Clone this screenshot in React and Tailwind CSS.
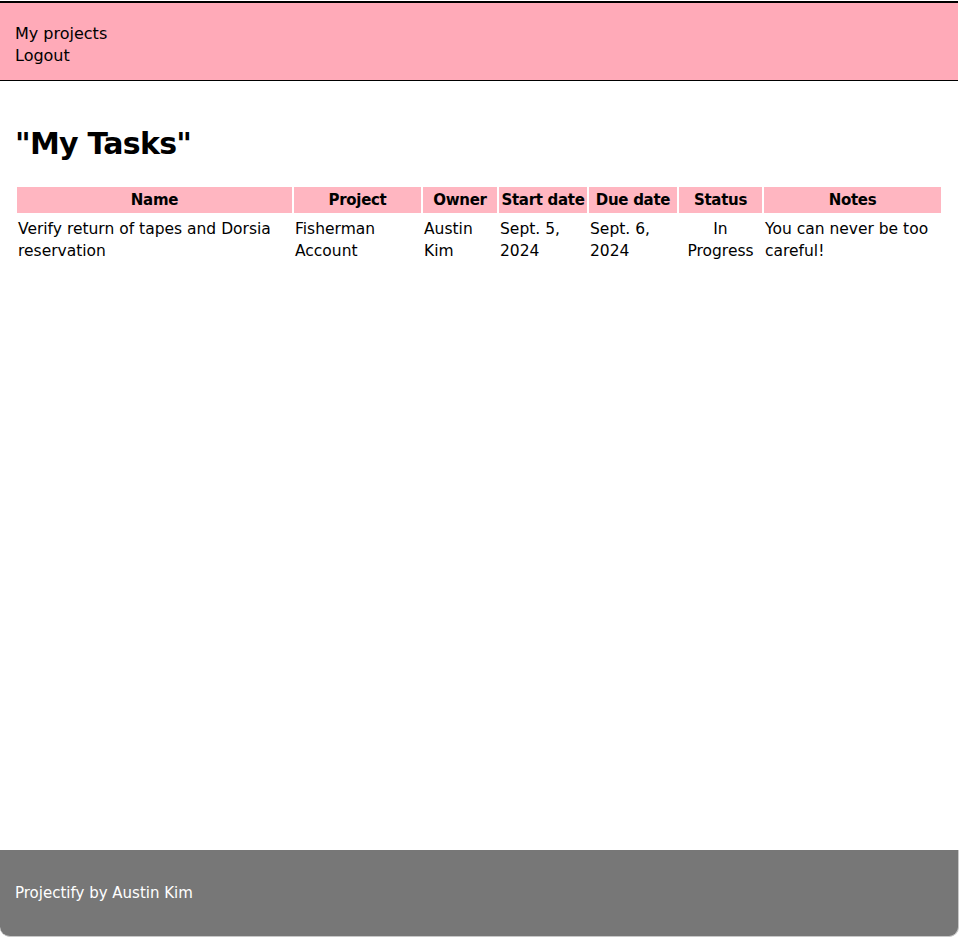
import React from "react";

const tasks = [
  {
    name: "Verify return of tapes and Dorsia reservation",
    project: "Fisherman Account",
    owner: "Austin Kim",
    start: "Sept. 5, 2024",
    due: "Sept. 6, 2024",
    status: "In Progress",
    notes: "You can never be too careful!",
  },
];

const columns = [
  { label: "Name", w: "w-[275px]" },
  { label: "Project", w: "w-[127px]" },
  { label: "Owner", w: "w-[74px]" },
  { label: "Start date", w: "w-[88px]" },
  { label: "Due date", w: "w-[88px]" },
  { label: "Status", w: "w-[83px]" },
  { label: "Notes", w: "w-[177px]" },
];

const App = () => {
  return (
    <div className="min-h-screen flex flex-col bg-white text-black font-['Comic_Sans_MS','DejaVu_Sans',sans-serif] pt-px">
      {/* Header */}
      <header className="w-[958px] bg-[#ffaab8] border-t-2 border-b border-black pl-[15px] pt-[20px] pb-[13px] text-[16px] leading-[22px]">
        <div>My projects</div>
        <div>Logout</div>
      </header>

      {/* Main */}
      <main className="flex-1 px-[15px] pt-[43px]">
        <h1 className="text-[30px] font-bold leading-[40px] tracking-tight">"My Tasks"</h1>

        <table className="table-fixed w-[928px] mt-[21px] border-separate border-spacing-[2px]">
          <thead>
            <tr className="text-[15px] tracking-[-0.02em]">
              {columns.map((c) => (
                <th key={c.label} className={`${c.w} bg-[#ffb6c1] font-bold text-center h-[26px] p-0 whitespace-nowrap`}>
                  {c.label}
                </th>
              ))}
            </tr>
          </thead>
          <tbody>
            {tasks.map((t) => (
              <tr key={t.name} className="align-top text-[15.5px] leading-[22px]">
                <td className="px-[1px] pt-[3px]">{t.name}</td>
                <td className="px-[1px] pt-[3px]">{t.project}</td>
                <td className="px-[1px] pt-[3px]">{t.owner}</td>
                <td className="px-[1px] pt-[3px]">{t.start}</td>
                <td className="px-[1px] pt-[3px]">{t.due}</td>
                <td className="px-0 pt-[3px] text-center">{t.status}</td>
                <td className="px-[1px] pt-[3px]">{t.notes}</td>
              </tr>
            ))}
          </tbody>
        </table>
      </main>

      {/* Footer */}
      <footer className="w-[959px] h-[87px] bg-[#777777] border-r border-b border-[#c8c8c8] rounded-b-[10px] flex items-center pl-[15px] text-white text-[15px]">
        Projectify by Austin Kim
      </footer>
    </div>
  );
};

export default App;
